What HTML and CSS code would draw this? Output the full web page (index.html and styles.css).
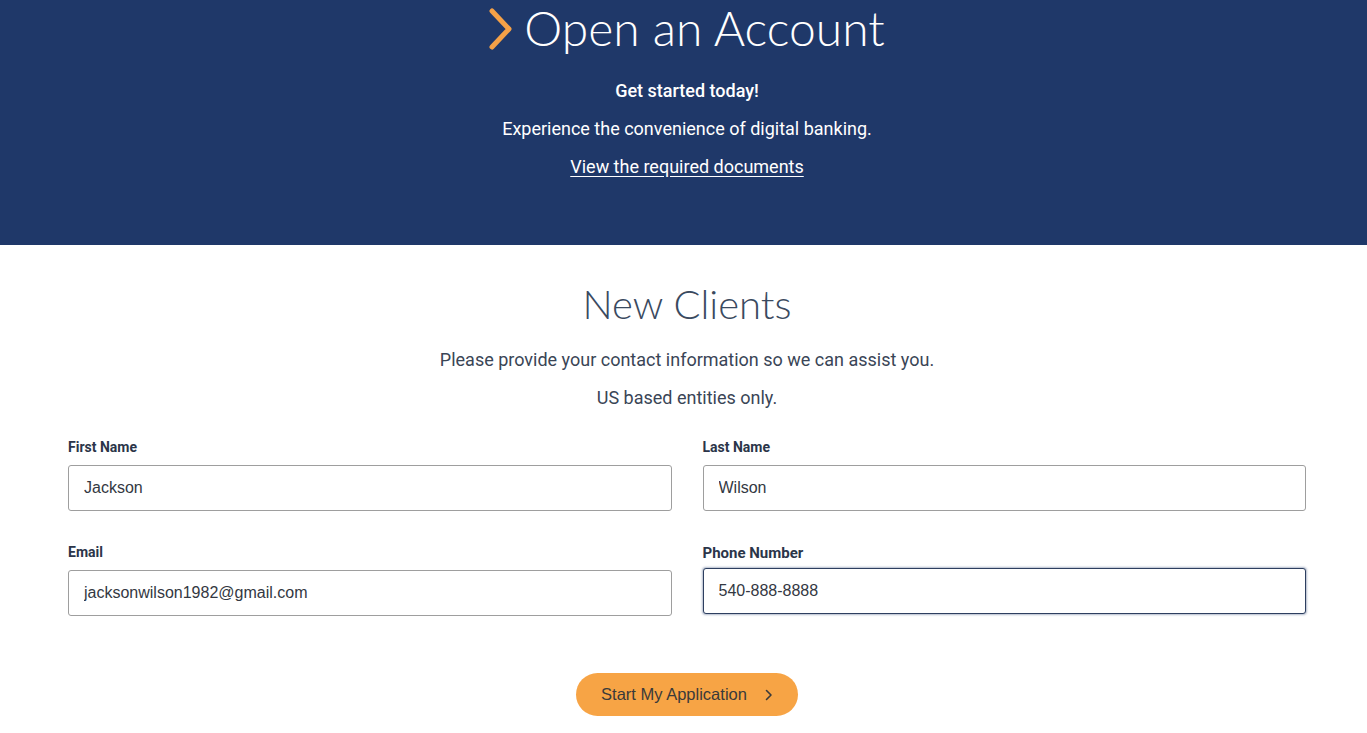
FILE: index.html
```html
<!DOCTYPE html>
<html lang="en">
<head>
<meta charset="utf-8">
<title>Open an Account</title>
<link rel="stylesheet" href="styles.css">
</head>
<body>
<header class="hero">
  <div class="hero-inner">
    <h1 class="hero-title">
      <svg class="hero-chevron" width="24" height="42" viewBox="0 0 24 42" aria-hidden="true">
        <path d="M3 3 L20 21 L3 39" fill="none" stroke="#f5a147" stroke-width="5" stroke-linecap="round" stroke-linejoin="round"/>
      </svg>
      <span>Open an Account</span>
    </h1>
    <p class="hero-lead">Get started today!</p>
    <p class="hero-text">Experience the convenience of digital banking.</p>
    <p class="hero-text"><a href="#" class="hero-link">View the required documents</a></p>
  </div>
</header>

<main class="clients">
  <div class="clients-inner">
    <h2 class="clients-title">New Clients</h2>
    <p class="clients-text clients-first">Please provide your contact information so we can assist you.</p>
    <p class="clients-text">US based entities only.</p>

    <form class="form">
      <div class="field">
        <label class="label" for="fn">First Name</label>
        <input class="input" id="fn" type="text" value="Jackson">
      </div>
      <div class="field">
        <label class="label" for="ln">Last Name</label>
        <input class="input" id="ln" type="text" value="Wilson">
      </div>
      <div class="field">
        <label class="label" for="em">Email</label>
        <input class="input" id="em" type="text" value="jacksonwilson1982@gmail.com">
      </div>
      <div class="field">
        <label class="label label-focus" for="ph">Phone Number</label>
        <input class="input input-focus" id="ph" type="text" value="540-888-8888">
      </div>
    </form>

    <div class="actions">
      <button class="btn" type="button">
        <span>Start My Application</span>
        <svg class="btn-chevron" width="8" height="12" viewBox="0 0 8 12" aria-hidden="true">
          <path d="M1.5 1.5 L6 6 L1.5 10.5" fill="none" stroke="#3a3a3a" stroke-width="1.6" stroke-linecap="round" stroke-linejoin="round"/>
        </svg>
      </button>
    </div>
  </div>
</main>
</body>
</html>
```

FILE: styles.css
```css
* { box-sizing: border-box; }

html, body {
  margin: 0;
  padding: 0;
  background: #ffffff;
  font-family: Roboto, "Liberation Sans", Arial, sans-serif;
}

.hero {
  background: #1f3869;
  height: 245px;
  padding-left: 7px;
  color: #ffffff;
}

.hero-inner {
  display: flex;
  flex-direction: column;
  align-items: center;
}

.hero-title {
  margin: 0;
  height: 60px;
  display: flex;
  align-items: center;
  gap: 11px;
  font-family: Lato, "Open Sans", sans-serif;
  font-weight: 300;
  font-size: 48px;
  line-height: 60px;
  color: #ffffff;
}

.hero-chevron {
  flex: none;
  margin-top: -3px;
}

.hero-title span {
  margin-top: -4px;
}

.hero-lead {
  margin: 20px 0 0;
  font-size: 18px;
  line-height: 22px;
  font-weight: 500;
}

.hero-text {
  margin: 16px 0 0;
  font-size: 18px;
  line-height: 22px;
  font-weight: 400;
}

.hero-link {
  color: #ffffff;
  font-weight: 400;
  text-decoration: underline;
  text-underline-offset: 3px;
}

.clients {
  padding-left: 7px;
}

.clients-inner {
  display: flex;
  flex-direction: column;
  align-items: center;
}

.clients-title {
  margin: 35px 0 0;
  font-family: Lato, "Open Sans", sans-serif;
  font-weight: 300;
  font-size: 40px;
  line-height: 48px;
  color: #3a4a5f;
}

.clients-text {
  margin: 16px 0 0;
  font-size: 18px;
  line-height: 22px;
  color: #3a4556;
}

.clients-first {
  margin-top: 21px;
}

.form {
  width: 1238px;
  margin-top: 29px;
  display: grid;
  grid-template-columns: 1fr 1fr;
  column-gap: 31px;
  row-gap: 32px;
}

.field {
  display: flex;
  flex-direction: column;
}

.label {
  font-size: 14px;
  line-height: 18px;
  font-weight: 700;
  color: #2b3549;
  margin-bottom: 9px;
}

.label-focus {
  font-size: 15px;
  margin-top: 1px;
  margin-bottom: 6px;
}

.input {
  height: 46px;
  border: 1px solid #9e9e9e;
  border-radius: 3px;
  padding: 0 15px;
  font-family: "Liberation Sans", Arial, sans-serif;
  font-size: 16px;
  color: #333842;
  background: #ffffff;
  outline: none;
}

.input-focus {
  border: 1px solid #2d3f60;
  box-shadow: 0 0 2px 1px rgba(31, 56, 105, 0.35);
}

.actions {
  margin-top: 57px;
  display: flex;
  justify-content: center;
}

.btn {
  width: 222px;
  height: 43px;
  border: none;
  border-radius: 22px;
  background: #f7a445;
  color: #3a3a3a;
  font-family: "Liberation Sans", Arial, sans-serif;
  font-size: 16.5px;
  display: flex;
  align-items: center;
  justify-content: center;
  gap: 18px;
  padding: 0;
  cursor: pointer;
}

.btn-chevron {
  flex: none;
}
```
